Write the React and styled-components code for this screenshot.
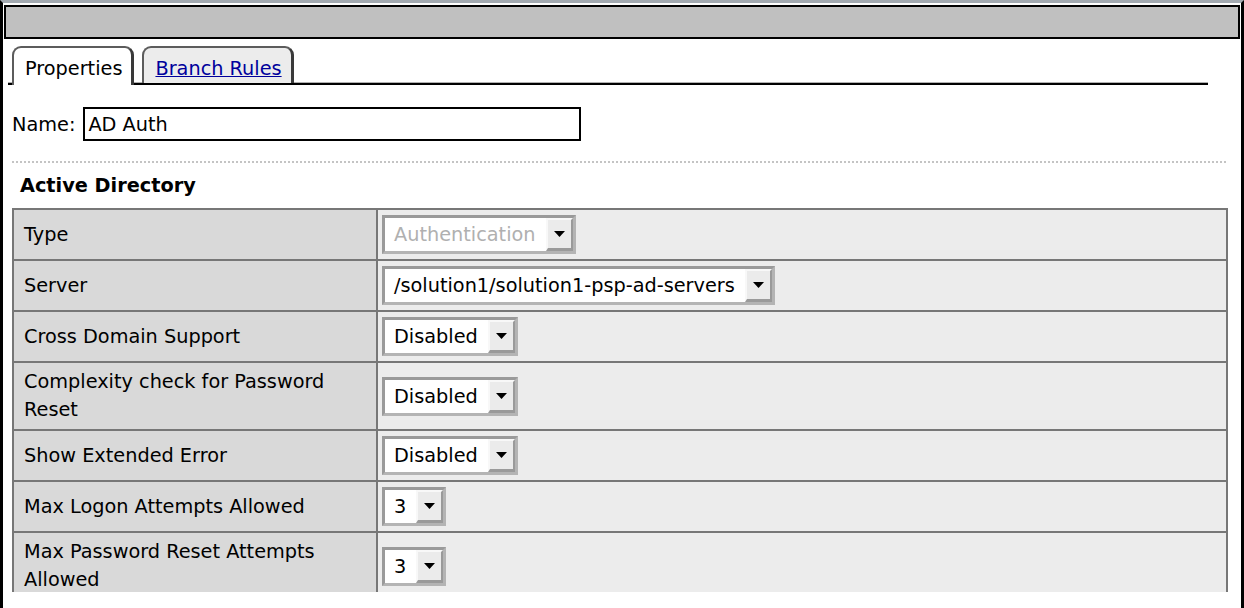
import React from "react";
import styled, { createGlobalStyle } from "styled-components";

const GlobalStyle = createGlobalStyle`
  html, body {
    margin: 0;
    padding: 0;
    background: #fff;
  }
  body {
    font-family: "DejaVu Sans", Verdana, sans-serif;
    font-size: 19.3px;
    color: #000;
  }
`;

const rows = [
  { label: "Type", value: "Authentication", disabled: true },
  { label: "Server", value: "/solution1/solution1-psp-ad-servers" },
  { label: "Cross Domain Support", value: "Disabled" },
  { label: "Complexity check for Password Reset", value: "Disabled" },
  { label: "Show Extended Error", value: "Disabled" },
  { label: "Max Logon Attempts Allowed", value: "3" },
  { label: "Max Password Reset Attempts Allowed", value: "3" },
];

const Select = ({ value, disabled }) => (
  <SelectBox>
    <SelectText $disabled={disabled}>{value}</SelectText>
    <ArrowButton>
      <svg width="11" height="6" viewBox="0 0 11 6">
        <path d="M0 0 L11 0 L5.5 6 Z" fill="#000" />
      </svg>
    </ArrowButton>
  </SelectBox>
);

const App = () => {
  return (
    <Frame>
      <GlobalStyle />
      <TitleBar />
      <Content>
        <TabBar>
          <Tab $active>Properties</Tab>
          <Tab>
            <TabLink href="#">Branch Rules</TabLink>
          </Tab>
        </TabBar>
        <NameRow>
          <span>Name:</span>
          <NameInput>AD Auth</NameInput>
        </NameRow>
        <Dotted />
        <SectionTitle>Active Directory</SectionTitle>
        <Grid>
          {rows.map((r) => (
            <Row key={r.label}>
              <Label>{r.label}</Label>
              <Value>
                <Select value={r.value} disabled={r.disabled} />
              </Value>
            </Row>
          ))}
        </Grid>
      </Content>
    </Frame>
  );
};

export default App;

const Frame = styled.div`
  box-sizing: border-box;
  height: 608px;
  border-top: 3px solid #a3aab1;
  border-left: 3px solid #000;
  border-right: 3px solid #000;
  padding-bottom: 16px;
  display: flex;
  flex-direction: column;
`;

const TitleBar = styled.div`
  box-sizing: border-box;
  height: 34px;
  margin: 2px 1px 0 1px;
  border: 2px solid #000;
  background: #c0c0c0;
  flex-shrink: 0;
`;

const Content = styled.div`
  flex: 1;
  overflow: hidden;
  padding: 0 13px 0 9px;
`;

const TabBar = styled.div`
  display: flex;
  align-items: flex-end;
  gap: 8px;
  margin: 7px 20px 0 -4px;
  padding-left: 4px;
  border-bottom: 2px solid #000;
  box-shadow: 0 -1px 0 #b0b0b0 inset;
  height: 37px;
`;

const Tab = styled.div`
  box-sizing: border-box;
  height: ${(p) => (p.$active ? "39px" : "37px")};
  margin-bottom: ${(p) => (p.$active ? "-2px" : "0")};
  padding: 6px 9px 0 11px;
  padding-bottom: ${(p) => (p.$active ? "2px" : "0")};
  display: flex;
  align-items: center;
  background: ${(p) => (p.$active ? "#fff" : "#ececec")};
  border: 2px solid #5c5c5c;
  border-right: 3px solid #3a3a3a;
  border-bottom: none;
  border-radius: 9px 9px 0 0;
  line-height: 1;
`;

const TabLink = styled.a`
  color: #00009c;
  text-decoration: underline;
`;

const NameRow = styled.div`
  display: flex;
  align-items: center;
  gap: 8px;
  margin-top: 22px;
`;

const NameInput = styled.div`
  box-sizing: border-box;
  width: 498px;
  height: 34px;
  border: 2px solid #000;
  padding: 0 3px;
  display: flex;
  align-items: center;
`;

const Dotted = styled.div`
  margin: 20px 2px 0 0;
  border-top: 2px dotted #c4c4c4;
`;

const SectionTitle = styled.div`
  font-weight: bold;
  line-height: 24px;
  margin: 11px 0 10px 8px;
`;

const Grid = styled.div`
  border: 2px solid #777;
  border-bottom: none;
`;

const Row = styled.div`
  display: grid;
  grid-template-columns: 364px 1fr;
  border-bottom: 2px solid #777;
`;

const Label = styled.div`
  padding: 5px 10px;
  line-height: 28px;
  background: #d9d9d9;
  border-right: 2px solid #777;
  display: flex;
  align-items: center;
`;

const Value = styled.div`
  padding: 5px 4px;
  background: #ececec;
  display: flex;
  align-items: center;
`;

const SelectBox = styled.div`
  box-sizing: border-box;
  display: inline-flex;
  align-items: stretch;
  height: 39px;
  background: #fff;
  border: 3px solid;
  border-color: #9a9a9a #b4b4b4 #b4b4b4 #9a9a9a;
`;

const SelectText = styled.div`
  display: flex;
  align-items: center;
  padding: 0 10px 0 9px;
  color: ${(p) => (p.$disabled ? "#b0b0b0" : "#000")};
`;

const ArrowButton = styled.div`
  box-sizing: border-box;
  width: 27px;
  display: flex;
  align-items: center;
  justify-content: center;
  background: #ebebeb;
  border-top: 2px solid #f8f8f8;
  border-left: 2px solid #f8f8f8;
  border-right: 2px solid #9a9a9a;
  border-bottom: 3px solid #9a9a9a;
`;
